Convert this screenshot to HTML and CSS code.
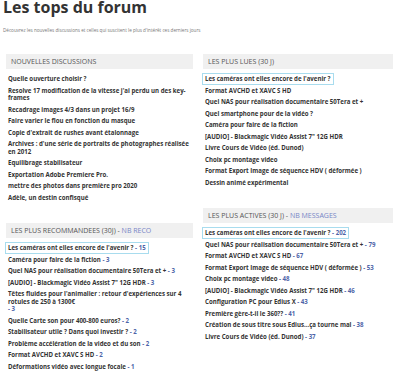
FILE: index.html
```html
<!DOCTYPE html>
<html lang="fr">
<head>
<meta charset="utf-8">
<link rel="stylesheet" href="styles.css">
</head>
<body>
<div class="page">
  <h1 class="title">Les tops du forum</h1>
  <p class="intro">Découvrez les nouvelles discussions et celles qui suscitent le plus d'intérêt ces derniers jours</p>
  <div class="cols">
    <div class="col col-left">
      <section class="block">
        <h2 class="block-head">NOUVELLES DISCUSSIONS</h2>
        <ul class="list">
          <li><a class="topic">Quelle ouverture choisir ?</a></li>
          <li><a class="topic">Resolve 17 modification de la vitesse j'ai perdu un des key-frames</a></li>
          <li><a class="topic">Recadrage images 4/3 dans un projet 16/9</a></li>
          <li><a class="topic">Faire varier le flou en fonction du masque</a></li>
          <li><a class="topic">Copie d'extrait de rushes avant étalonnage</a></li>
          <li><a class="topic">Archives : d'une série de portraits de photographes réalisée en 2012</a></li>
          <li><a class="topic">Equilibrage stabilisateur</a></li>
          <li><a class="topic">Exportation Adobe Premiere Pro.</a></li>
          <li><a class="topic">mettre des photos dans première pro 2020</a></li>
          <li><a class="topic">Adèle, un destin confisqué</a></li>
        </ul>
      </section>
      <section class="block">
        <h2 class="block-head">LES PLUS RECOMMANDEES (30J) - <span class="nb">NB RECO</span></h2>
        <ul class="list">
          <li class="hot"><span class="hot-box"><a class="topic">Les caméras ont elles encore de l'avenir ?</a> <span class="count">- 15</span></span></li>
          <li><a class="topic">Caméra pour faire de la fiction</a> <span class="count">- 3</span></li>
          <li><a class="topic">Quel NAS pour réalisation documentaire 50Tera et +</a> <span class="count">- 3</span></li>
          <li><a class="topic">[AUDIO] - Blackmagic Vidéo Assist 7" 12G HDR</a> <span class="count">- 3</span></li>
          <li><a class="topic block-link">Têtes fluides pour l'animalier : retour d'expériences sur 4 rotules de 250 à 1300€</a> <span class="count">- 3</span></li>
          <li><a class="topic">Quelle Carte son pour 400-800 euros?</a> <span class="count">- 2</span></li>
          <li><a class="topic">Stabilisateur utile ? Dans quoi investir ?</a> <span class="count">- 2</span></li>
          <li><a class="topic">Problème accélération de la video et du son</a> <span class="count">- 2</span></li>
          <li><a class="topic">Format AVCHD et XAVC S HD</a> <span class="count">- 2</span></li>
          <li><a class="topic">Déformations vidéo avec longue focale</a> <span class="count">- 1</span></li>
        </ul>
      </section>
    </div>
    <div class="col col-right">
      <section class="block">
        <h2 class="block-head">LES PLUS LUES (30 J)</h2>
        <ul class="list">
          <li class="hot"><span class="hot-box"><a class="topic">Les caméras ont elles encore de l'avenir ?</a></span></li>
          <li><a class="topic">Format AVCHD et XAVC S HD</a></li>
          <li><a class="topic">Quel NAS pour réalisation documentaire 50Tera et +</a></li>
          <li><a class="topic">Quel smartphone pour de la vidéo ?</a></li>
          <li><a class="topic">Caméra pour faire de la fiction</a></li>
          <li><a class="topic">[AUDIO] - Blackmagic Vidéo Assist 7" 12G HDR</a></li>
          <li><a class="topic">Livre Cours de Vidéo (éd. Dunod)</a></li>
          <li><a class="topic">Choix pc montage video</a></li>
          <li><a class="topic">Format Export Image de séquence HDV ( déformée )</a></li>
          <li><a class="topic">Dessin animé expérimental</a></li>
        </ul>
      </section>
      <section class="block">
        <h2 class="block-head">LES PLUS ACTIVES (30 J) - <span class="nb">NB MESSAGES</span></h2>
        <ul class="list">
          <li class="hot"><span class="hot-box"><a class="topic">Les caméras ont elles encore de l'avenir ?</a> <span class="count">- 202</span></span></li>
          <li><a class="topic">Quel NAS pour réalisation documentaire 50Tera et +</a> <span class="count">- 79</span></li>
          <li><a class="topic">Format AVCHD et XAVC S HD</a> <span class="count">- 67</span></li>
          <li><a class="topic">Format Export Image de séquence HDV ( déformée )</a> <span class="count">- 53</span></li>
          <li><a class="topic">Choix pc montage video</a> <span class="count">- 48</span></li>
          <li><a class="topic">[AUDIO] - Blackmagic Vidéo Assist 7" 12G HDR</a> <span class="count">- 46</span></li>
          <li><a class="topic">Configuration PC pour Edius X</a> <span class="count">- 43</span></li>
          <li><a class="topic">Première gère-t-il le 360??</a> <span class="count">- 41</span></li>
          <li><a class="topic">Création de sous titre sous Edius...ça tourne mal</a> <span class="count">- 38</span></li>
          <li><a class="topic">Livre Cours de Vidéo (éd. Dunod)</a> <span class="count">- 37</span></li>
        </ul>
      </section>
    </div>
  </div>
</div>
</body>
</html>
```

FILE: styles.css
```css
* { box-sizing: border-box; }
html, body { margin: 0; padding: 0; background: #fff; }
body {
  font-family: "Open Sans", "DejaVu Sans", sans-serif;
  color: #333;
}
.page {
  width: 400px;
  padding: 0 7px 0 6px;
}
.title {
  margin: 0 0 0 -3px;
  font-size: 16px;
  line-height: 15px;
  font-weight: 700;
  color: #333;
}
.intro {
  margin: 12px 0 0 -3px;
  font-size: 4.6px;
  line-height: 6px;
  color: #777;
}
.cols {
  display: grid;
  grid-template-columns: 187px 190px;
  column-gap: 10px;
  margin-top: 21px;
  align-items: start;
}
.block { margin-bottom: 20px; }
.block-head {
  margin: 0;
  height: 15px;
  padding: 0 5px;
  background: #f0f0f0;
  font-size: 7px;
  line-height: 15px;
  font-weight: 400;
  color: #555;
  white-space: nowrap;
}
.nb { color: #7785c6; }
.list {
  list-style: none;
  margin: 0;
  padding: 4px 0 0 2px;
}
.list li {
  padding: 2px 0;
  font-size: 6.1px;
  line-height: 7.5px;
  font-weight: 700;
  color: #333;
}
.topic { color: #333; text-decoration: none; }
.block-link { display: inline-block; }
.count { color: #4d64a8; }
.hot-box {
  display: inline-block;
  outline: 1px solid #a8dcee;
  outline-offset: 0;
  padding: 1px 2px;
  margin: -1px 0 -1px -2px;
}
```
